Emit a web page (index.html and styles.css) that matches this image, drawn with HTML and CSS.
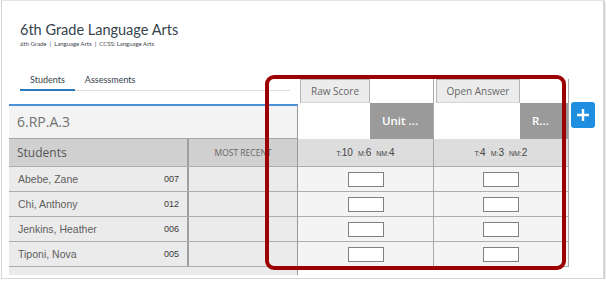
FILE: index.html
```html
<!DOCTYPE html>
<html lang="en">
<head>
    <meta charset="UTF-8">
    <meta name="viewport" content="width=device-width, initial-scale=1.0">
    <title>6th Grade Language Arts</title>
    <link rel="stylesheet" href="styles.css">
</head>
<body>
    <div class="card">
        <div class="course">
            <h1 class="course-title">6th Grade Language Arts</h1>
            <p class="course-meta">6th Grade &nbsp;|&nbsp; Language Arts &nbsp;|&nbsp; CCSS: Language Arts</p>
        </div>

        <div class="workspace">
            <div class="left-col">
                <nav class="tabs">
                    <a class="tab active">Students</a>
                    <a class="tab">Assessments</a>
                </nav>
                <div class="students-table">
                    <div class="standard-row">6.RP.A.3</div>
                    <div class="students-head">
                        <div class="name-col">Students</div>
                        <div class="recent-col">Most Recent</div>
                    </div>
                    <div class="student-row">
                        <div class="name-col"><span>Abebe, Zane</span><span class="sid">007</span></div>
                        <div class="recent-col"></div>
                    </div>
                    <div class="student-row">
                        <div class="name-col"><span>Chi, Anthony</span><span class="sid">012</span></div>
                        <div class="recent-col"></div>
                    </div>
                    <div class="student-row">
                        <div class="name-col"><span>Jenkins, Heather</span><span class="sid">006</span></div>
                        <div class="recent-col"></div>
                    </div>
                    <div class="student-row">
                        <div class="name-col"><span>Tiponi, Nova</span><span class="sid">005</span></div>
                        <div class="recent-col"></div>
                    </div>
                    <div class="table-foot"></div>
                </div>
            </div>

            <div class="assessments">
                <div class="assessment raw">
                    <div class="a-top"><span class="a-tab">Raw Score</span></div>
                    <div class="a-head"><div class="a-blank"></div><div class="a-name">Unit ...</div></div>
                    <div class="a-stats"><small>T:</small>10<small>M:</small>6<small>NM:</small>4</div>
                    <div class="a-cell"><span class="score-box"></span></div>
                    <div class="a-cell"><span class="score-box"></span></div>
                    <div class="a-cell"><span class="score-box"></span></div>
                    <div class="a-cell"><span class="score-box"></span></div>
                </div>
                <div class="assessment open">
                    <div class="a-top"><span class="a-tab">Open Answer</span></div>
                    <div class="a-head"><div class="a-blank"></div><div class="a-name">R...</div></div>
                    <div class="a-stats"><small>T:</small>4<small>M:</small>3<small>NM:</small>2</div>
                    <div class="a-cell"><span class="score-box"></span></div>
                    <div class="a-cell"><span class="score-box"></span></div>
                    <div class="a-cell"><span class="score-box"></span></div>
                    <div class="a-cell"><span class="score-box"></span></div>
                </div>
            </div>

            <button class="add-btn" aria-label="Add assessment">
                <svg width="14" height="14" viewBox="0 0 14 14"><path d="M7 1v12M1 7h12" stroke="#fff" stroke-width="2.4" fill="none"/></svg>
            </button>
        </div>

        <!-- callout around the assessment columns -->
        <div class="highlight"></div>
    </div>
</body>
</html>
```

FILE: styles.css
```css
body {
    margin: 0;
    background-color: #ffffff;
    font-family: Lato, "Open Sans", sans-serif;
}
.card {
    position: relative;
    height: 279px;
    margin: 0 2px 0 1px;
    border: 1px solid #d6d6d6;
    border-top-color: #e4e4e4;
    box-sizing: border-box;
    background-color: #ffffff;
    box-shadow: 1px 1px 2px rgba(0,0,0,0.25);
}
.course {
    padding: 20px 18px 0;
}
.course-title {
    margin: 0;
    font-size: 14.5px;
    line-height: 18px;
    font-weight: 400;
    color: #36434c;
}
.course-meta {
    margin: 1px 0 0;
    font-size: 6px;
    line-height: 8px;
    color: #3c464e;
}
.workspace {
    display: flex;
    align-items: flex-start;
    margin-top: 26px;
    padding-left: 7px;
}
.left-col {
    width: 289px;
}
.tabs {
    display: flex;
    width: 270px;
    margin-left: 11px;
    border-bottom: 1px solid #dddddd;
}
.tab {
    padding: 0 10px 3px;
    margin-bottom: -1px;
    font-size: 9px;
    line-height: 12px;
    color: #36434c;
    border-bottom: 2px solid transparent;
}
.tab.active {
    border-bottom-color: #2b7abc;
}
.students-table {
    margin-top: 13px;
    border-top: 2px solid #4c8fd6;
    border-right: 1px solid #9a9a9a;
    background-color: #ebebeb;
}
.standard-row {
    height: 32px;
    padding-left: 8px;
    background-color: #f3f3f3;
    border-bottom: 1px solid #a5a5a5;
    font-family: "Open Sans", sans-serif;
    font-size: 14px;
    line-height: 32px;
    color: #707070;
}
.students-head,
.student-row {
    display: flex;
    border-bottom: 1px solid #adadad;
}
.students-head {
    height: 27px;
    background-color: #d0d0d0;
    font-family: "Open Sans", sans-serif;
}
.student-row {
    height: 24px;
}
.name-col {
    display: flex;
    align-items: center;
    justify-content: space-between;
    box-sizing: border-box;
    width: 180px;
    padding: 0 8px 0 9px;
    border-right: 2px solid #a0a0a0;
}
.recent-col {
    flex: 1;
    display: flex;
    align-items: center;
    justify-content: center;
}
.students-head .name-col {
    padding-left: 8px;
    font-size: 12px;
    color: #555555;
}
.students-head .recent-col {
    font-size: 8.5px;
    text-transform: uppercase;
    color: #666666;
}
.student-row .name-col {
    font-family: "Liberation Sans", Arial, sans-serif;
    font-size: 10.5px;
    color: #5e5e5e;
}
.sid {
    font-size: 9px;
    color: #3a3a3a;
}
.table-foot {
    height: 8px;
}
.assessments {
    display: flex;
    margin-top: 5px;
}
.assessment {
    border-right: 1px solid #a8a8a8;
}
.assessment.raw {
    width: 135px;
}
.assessment.open {
    width: 134px;
}
.a-top {
    height: 24px;
    padding-left: 2px;
}
.a-tab {
    display: inline-block;
    box-sizing: border-box;
    height: 24px;
    border: 1px solid #b4b4b4;
    border-bottom-color: #d6d6d6;
    background-color: #ececec;
    font-family: "Open Sans", sans-serif;
    font-size: 10px;
    line-height: 22px;
    color: #666666;
    text-align: center;
}
.raw .a-tab {
    width: 70px;
}
.open .a-tab {
    width: 84px;
}
.a-head {
    display: flex;
    height: 36px;
}
.raw .a-blank {
    width: 72px;
}
.open .a-blank {
    width: 86px;
}
.a-name {
    flex: 1;
    padding-left: 12px;
    background-color: #9a9a9a;
    font-family: "Open Sans", sans-serif;
    font-size: 11.5px;
    font-weight: 600;
    line-height: 36px;
    color: #ffffff;
    white-space: nowrap;
    overflow: hidden;
}
.a-stats {
    height: 27px;
    background-color: #dddddd;
    border-bottom: 1px solid #adadad;
    font-family: "Liberation Sans", Arial, sans-serif;
    font-size: 10px;
    line-height: 27px;
    color: #444444;
    text-align: center;
}
.a-stats small {
    margin-left: 5px;
    font-size: 7px;
}
.a-stats small:first-child {
    margin-left: 0;
}
.a-cell {
    display: flex;
    align-items: center;
    justify-content: center;
    height: 24px;
    background-color: #f4f4f4;
    border-bottom: 1px solid #adadad;
}
.score-box {
    width: 34px;
    height: 13px;
    border: 1px solid #808080;
    background-color: #ffffff;
}
.add-btn {
    display: flex;
    align-items: center;
    justify-content: center;
    width: 24px;
    height: 26px;
    margin: 28px 0 0 2px;
    padding: 0;
    border: none;
    border-radius: 3px;
    background-color: #1d8ee0;
}
.highlight {
    position: absolute;
    left: 263px;
    top: 74px;
    width: 301px;
    height: 195px;
    box-sizing: border-box;
    border: 4px solid #9c0000;
    border-radius: 9px;
}
```
